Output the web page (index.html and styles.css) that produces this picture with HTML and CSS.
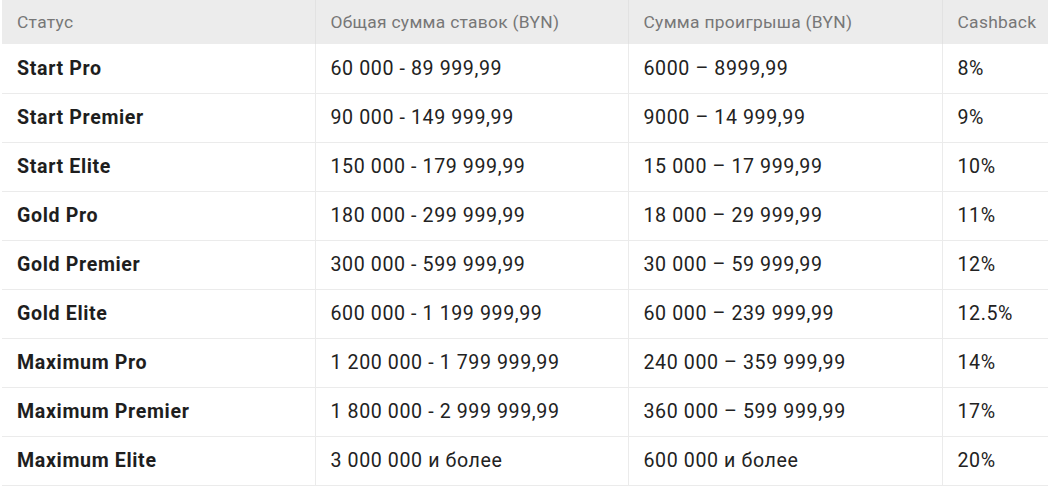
FILE: index.html
```html
<!DOCTYPE html>
<html lang="ru">
<head>
<meta charset="utf-8">
<link rel="stylesheet" href="styles.css">
</head>
<body>
<table class="cb">
  <thead>
    <tr><th class="c1">Статус</th><th class="c2">Общая сумма ставок (BYN)</th><th class="c3">Сумма проигрыша (BYN)</th><th class="c4">Cashback</th></tr>
  </thead>
  <tbody>
    <tr><td class="name">Start Pro</td><td>60 000 - 89 999,99</td><td>6000 – 8999,99</td><td>8%</td></tr>
    <tr><td class="name">Start Premier</td><td>90 000 - 149 999,99</td><td>9000 – 14 999,99</td><td>9%</td></tr>
    <tr><td class="name">Start Elite</td><td>150 000 - 179 999,99</td><td>15 000 – 17 999,99</td><td>10%</td></tr>
    <tr><td class="name">Gold Pro</td><td>180 000 - 299 999,99</td><td>18 000 – 29 999,99</td><td>11%</td></tr>
    <tr><td class="name">Gold Premier</td><td>300 000 - 599 999,99</td><td>30 000 – 59 999,99</td><td>12%</td></tr>
    <tr><td class="name">Gold Elite</td><td>600 000 - 1 199 999,99</td><td>60 000 – 239 999,99</td><td>12.5%</td></tr>
    <tr><td class="name">Maximum Pro</td><td>1 200 000 - 1 799 999,99</td><td>240 000 – 359 999,99</td><td>14%</td></tr>
    <tr><td class="name">Maximum Premier</td><td>1 800 000 - 2 999 999,99</td><td>360 000 – 599 999,99</td><td>17%</td></tr>
    <tr><td class="name">Maximum Elite</td><td>3 000 000 и более</td><td>600 000 и более</td><td>20%</td></tr>
  </tbody>
</table>
</body>
</html>
```

FILE: styles.css
```css
html, body {
  margin: 0;
  padding: 0;
  background: #ffffff;
}
body {
  font-family: Roboto, "Liberation Sans", sans-serif;
  overflow: hidden;
}
.cb {
  margin-left: 2px;
  width: 1060px;
  border-collapse: collapse;
  table-layout: fixed;
}
.c1 { width: 313px; }
.c2 { width: 313px; }
.c3 { width: 314px; }
.c4 { width: 120px; }
.cb th {
  background: #ececec;
  color: #777777;
  font-weight: 400;
  font-size: 17.4px;
  letter-spacing: 0.3px;
  text-align: left;
  height: 44px;
  padding: 0 15px;
  box-sizing: border-box;
  border-left: 1px solid #e2e2e2;
  vertical-align: middle;
  white-space: nowrap;
}
.cb th:first-child { border-left: none; }
.cb td {
  color: #222222;
  font-size: 19.6px;
  letter-spacing: 0.6px;
  height: 49px;
  padding: 0 15px;
  box-sizing: border-box;
  border-top: 1px solid #ebebeb;
  border-left: 1px solid #ebebeb;
  vertical-align: middle;
  white-space: nowrap;
}
.cb td:first-child { border-left: none; }
.cb tbody tr:first-child td { border-top: none; }
.cb tbody tr:last-child td { border-bottom: 1px solid #ebebeb; }
.cb td.name {
  font-weight: 700;
  color: #1e1e1e;
  letter-spacing: 0.65px;
}
```
